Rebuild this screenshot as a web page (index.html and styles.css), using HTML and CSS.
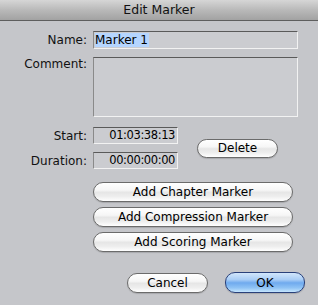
FILE: index.html
```html
<!DOCTYPE html>
<html lang="en">

<head>
    <meta charset="UTF-8">
    <title>Edit Marker</title>
    <link rel="stylesheet" href="styles.css">
</head>

<body>
    <div class="dialog">
        <div class="titlebar">Edit Marker</div>
        <div class="content">
            <div class="row">
                <label class="lbl">Name:</label>
                <div class="field name-field"><span class="sel">Marker 1</span></div>
            </div>
            <div class="row row-top">
                <label class="lbl lbl-top">Comment:</label>
                <div class="field comment-field"></div>
            </div>
            <div class="times">
                <div class="time-rows">
                    <div class="row">
                        <label class="lbl">Start:</label>
                        <div class="field time-field">01:03:38:13</div>
                    </div>
                    <div class="row">
                        <label class="lbl">Duration:</label>
                        <div class="field time-field">00:00:00:00</div>
                    </div>
                </div>
                <button class="pill delete-btn">Delete</button>
            </div>
            <div class="marker-buttons">
                <button class="pill wide">Add Chapter Marker</button>
                <button class="pill wide">Add Compression Marker</button>
                <button class="pill wide">Add Scoring Marker</button>
            </div>
            <div class="footer">
                <button class="pill footer-btn">Cancel</button>
                <button class="pill footer-btn ok-btn">OK</button>
            </div>
        </div>
    </div>
</body>

</html>
```

FILE: styles.css
```css
body {
    margin: 0;
    padding: 0;
    font-family: "DejaVu Sans", sans-serif;
    font-size: 12px;
    color: #000;
    background-color: #c5c6ca;
}

.dialog {
    width: 318px;
    height: 305px;
    background-color: #c5c6ca;
}

.titlebar {
    height: 20px;
    line-height: 20px;
    text-align: center;
    font-size: 12.5px;
    color: #111;
    background: linear-gradient(#d6d6d6, #b9b9b9 50%, #a2a2a2);
    border-bottom: 1px solid #5e5e5e;
}

.content {
    padding-top: 10px;
}

.row {
    display: flex;
    align-items: center;
    margin-bottom: 8px;
}

.row-top {
    align-items: flex-start;
    margin-bottom: 10px;
}

.lbl {
    width: 87px;
    margin-right: 6px;
    text-align: right;
    line-height: 14px;
    color: #111;
}

.lbl-top {
    margin-top: 0;
}

.field {
    box-sizing: border-box;
    background-color: #cbccd0;
    border-top: 1px solid #5a5a5a;
    border-left: 1px solid #8a8a8a;
    border-right: 1px solid #f2f2f2;
    border-bottom: 1px solid #f2f2f2;
}

.name-field {
    width: 205px;
    height: 18px;
    padding: 1px 1px;
    line-height: 14px;
}

.sel {
    background-color: #b5d5fe;
    padding-right: 1px;
}

.comment-field {
    width: 205px;
    height: 60px;
}

.times {
    display: flex;
    align-items: center;
}

.time-rows .row:last-child {
    margin-bottom: 0;
}

.time-field {
    width: 85px;
    height: 17px;
    line-height: 15px;
    text-align: right;
    padding-right: 2px;
    font-size: 11.5px;
    letter-spacing: -0.4px;
}

.pill {
    box-sizing: border-box;
    height: 20px;
    padding: 0;
    font-family: "DejaVu Sans", sans-serif;
    font-size: 12px;
    color: #000;
    border: 1px solid #6b6b6b;
    border-radius: 10px;
    background: linear-gradient(#ffffff 0%, #f6f6f6 40%, #e6e6e6 52%, #eeeeee 75%, #ffffff 100%);
    box-shadow: 0 1px 1px rgba(0, 0, 0, 0.15);
}

.delete-btn {
    width: 81px;
    height: 19px;
    margin-left: 19px;
}

.marker-buttons {
    display: flex;
    flex-direction: column;
    gap: 5px;
    margin: 13px 0 0 93px;
}

.wide {
    width: 200px;
}

.footer {
    display: flex;
    justify-content: flex-end;
    gap: 17px;
    margin-top: 21px;
    padding-right: 13px;
}

.footer-btn {
    width: 81px;
}

.ok-btn {
    width: 80px;
    height: 21px;
    margin-top: -1px;
    border-color: #29407a;
    background: linear-gradient(#d2e6fb 0%, #a9cdf6 35%, #6faaee 52%, #8fc3f5 78%, #c5e5fd 100%);
}
```
